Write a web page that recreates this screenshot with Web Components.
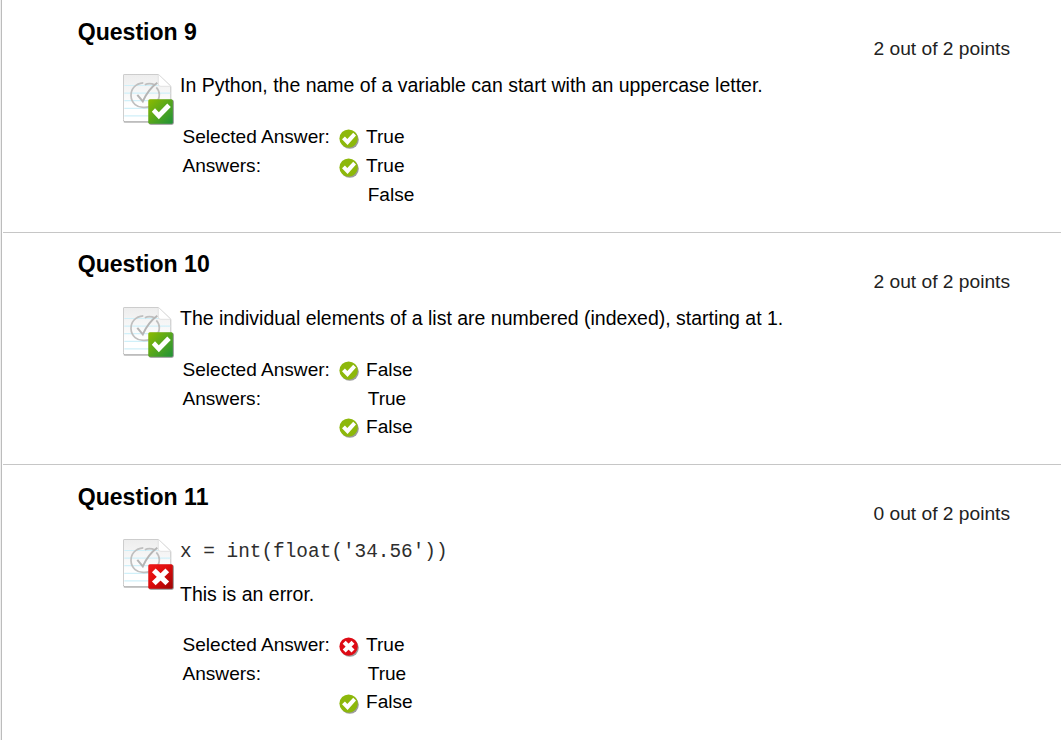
<!DOCTYPE html>
<html lang="en">
<head>
<meta charset="utf-8">
<title>Review Test Submission</title>
<style>
html,body{margin:0;background:#fff;color:#000;font-family:"Liberation Sans",Arial,sans-serif}
body{height:740px;overflow:hidden}
.code{font:19.4px/24px "Liberation Mono","Courier New",monospace;margin-bottom:18px;color:#2e2e2e}
</style>
</head>
<body>
<review-list>
  <quiz-question heading="Question 9" points="2 out of 2 points" status="correct" style="height:232px">
    In Python, the name of a variable can start with an uppercase letter.
    <answer-row slot="answers" label="Selected Answer:" mark="correct">True</answer-row>
    <answer-row slot="answers" label="Answers:" mark="correct">True</answer-row>
    <answer-row slot="answers">False</answer-row>
  </quiz-question>
  <quiz-question heading="Question 10" points="2 out of 2 points" status="correct" style="height:231px;--top:-1px;--mark-top:6px">
    The individual elements of a list are numbered (indexed), starting at 1.
    <answer-row slot="answers" label="Selected Answer:" mark="correct">False</answer-row>
    <answer-row slot="answers" label="Answers:">True</answer-row>
    <answer-row slot="answers" mark="correct" style="height:28px;margin-top:-1px">False</answer-row>
  </quiz-question>
  <quiz-question heading="Question 11" points="0 out of 2 points" status="wrong" style="height:275px;border:0;--prompt-top:2px;--answers-top:23px">
    <div class="code">x = int(float('34.56'))</div>
    <div>This is an error.</div>
    <answer-row slot="answers" label="Selected Answer:" mark="wrong">True</answer-row>
    <answer-row slot="answers" label="Answers:">True</answer-row>
    <answer-row slot="answers" mark="correct" style="height:28px;margin-top:-1px">False</answer-row>
  </quiz-question>
</review-list>
<script>
class ReviewList extends HTMLElement{
  constructor(){
    super();
    this.attachShadow({mode:'open'}).innerHTML=`<style>
      :host{display:block;box-sizing:border-box;height:740px;border-left:1px solid #efefef;overflow:hidden}
      main{border-left:1px solid #bcbcbc;padding-left:1px;height:100%}
    </style><main><slot></slot></main>`;
  }
}
class StatusPage extends HTMLElement{
  connectedCallback(){
    const ok=this.getAttribute('status')==='correct';
    const root=this.shadowRoot||this.attachShadow({mode:'open'});
    root.innerHTML=`<style>:host{display:block;width:52px;height:52px}svg{display:block}</style>
    <svg width="52" height="52" viewBox="0.7 0.7 52 52" fill="none">
      <defs>
        <linearGradient id="paper" x2="0" y2="1"><stop stop-color="#ededed"/><stop offset=".7" stop-color="#fff"/></linearGradient>
        <linearGradient id="badge" x1="0" y1="0" x2="1" y2="1">${ok?'<stop stop-color="#8dbb00"/><stop offset="1" stop-color="#1f9238"/>':'<stop stop-color="#f01a1a"/><stop offset=".45" stop-color="#df0b0b"/><stop offset="1" stop-color="#9c0505"/>'}</linearGradient>
      </defs>
      <path d="M2.500 1H36L48.500 13V46.500Q48.500 48.500 46.500 48.500H3Q1 48.500 1 46.500V2.500Q1 1 2.500 1Z" fill="url(#paper)" stroke="#c3c3c3"/>
      <path d="M1.500 48.700H47" stroke="#a5a5a5"/>
      <path d="M2 12.200H37M2 19.900H48M2 27.400H48M2 35H48M2 42.600H48" stroke="#d0f0f9" stroke-width="1.200"/>
      <path d="M36 1L48.500 13H38.500Q35.500 13 36 10Z" fill="#fff" stroke="#dcdcdc" stroke-width=".8"/>
      <path d="M21 9.500C13 10 8.500 16 8.700 22.500C9 30 15 34.500 22 34C30 34 37 29 37 21.500Q37 17 34 14M22.500 11.500Q27 9 32.500 11.500" stroke="#bfbfbf" stroke-width="1.700"/>
      <path d="M15 21.500L20.500 28Q26 16 35 9.500" stroke="#b5b5b5" stroke-width="2"/>
      <rect x="26.500" y="26.500" width="25" height="25" rx="2" fill="#8e8e8e"/>
      <rect x="26" y="26" width="24.500" height="24.500" rx="1.500" fill="url(#badge)"/>
      ${ok?'<path d="M29.500 38.500L32.700 35L36.500 39L45 30.200L48.500 33.800L36.500 46Z" fill="#fff"/>':'<path d="M31.500 32L45 45M45 32L31.500 45" stroke="#fff" stroke-width="5.300"/>'}
    </svg>`;
  }
}
class AnswerMark extends HTMLElement{
  connectedCallback(){
    const ok=this.getAttribute('kind')==='correct';
    const root=this.shadowRoot||this.attachShadow({mode:'open'});
    root.innerHTML=`<style>:host{display:block;width:20px;height:20px}svg{display:block}</style>
    <svg width="20" height="20" viewBox="0 0 20 20">
      <circle cx="10.800" cy="10.800" r="9" fill="#8b8b8b" opacity=".85"/>
      <circle cx="9.600" cy="9.600" r="9.200" fill="${ok?'#8db80b':'#de0b15'}"/>
      ${ok?'<path d="M3 10.300L5.900 7.500L8.300 10L14.200 3.700L17 6.600L8.600 15.900Z" fill="#fff"/>':'<path d="M5.200 5.200L14 14M14 5.200L5.200 14" stroke="#fff" stroke-width="4.200"/>'}
    </svg>`;
  }
}
class AnswerRow extends HTMLElement{
  connectedCallback(){
    const label=this.getAttribute('label')||'',mark=this.getAttribute('mark');
    const root=this.shadowRoot||this.attachShadow({mode:'open'});
    root.innerHTML=`<style>
      :host{display:grid;grid-template-columns:156.500px 1fr;height:29px;line-height:29px;font-size:19.080px;white-space:nowrap}
      .value{display:flex;gap:7px;padding-left:${mark?0:28.700}px}
      answer-mark{margin-top:var(--mark-top,7px)}
    </style><div>${label}</div><div class="value">${mark?`<answer-mark kind="${mark}"></answer-mark>`:''}<span><slot></slot></span></div>`;
  }
}
class QuizQuestion extends HTMLElement{
  connectedCallback(){
    const root=this.shadowRoot||this.attachShadow({mode:'open'});
    root.innerHTML=`<style>
      :host{display:block;border-bottom:1px solid #c6c6c6}
      header{display:flex;justify-content:space-between;height:74px;padding:0 51px 0 74.700px}
      h3{margin:0;padding-top:calc(18px + var(--top,0px));font-size:23.080px;line-height:28px}
      .points{padding-top:35px;font-size:19.200px;line-height:28px;color:#222}
      .body{display:grid;grid-template-columns:57px 1fr;padding-left:120px}
      .prompt{padding-top:var(--prompt-top,0px);margin-top:-1px;font-size:19.490px;line-height:25px}
      .answers{padding:var(--answers-top,24px) 0 0 2.500px}
    </style>
    <header><h3>${this.getAttribute('heading')}</h3><div class="points">${this.getAttribute('points')}</div></header>
    <div class="body"><status-page status="${this.getAttribute('status')}"></status-page>
      <div><div class="prompt"><slot></slot></div><div class="answers"><slot name="answers"></slot></div></div></div>`;
  }
}
customElements.define('review-list',ReviewList);
customElements.define('status-page',StatusPage);
customElements.define('answer-mark',AnswerMark);
customElements.define('answer-row',AnswerRow);
customElements.define('quiz-question',QuizQuestion);
</script>
</body>
</html>
